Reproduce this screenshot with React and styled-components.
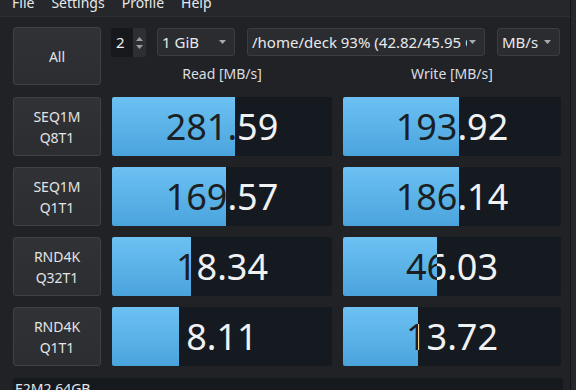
import React from "react";
import styled, { createGlobalStyle } from "styled-components";

const GlobalStyle = createGlobalStyle`
  html, body {
    margin: 0;
    padding: 0;
    background: #202226;
    overflow: hidden;
  }
  body {
    font-family: "Noto Sans", "DejaVu Sans", sans-serif;
    color: #e4e5e7;
  }
`;

const Window = styled.div`
  width: 576px;
  height: 390px;
  overflow: hidden;
  display: flex;
  background: #202226;
`;

const Main = styled.div`
  flex: 1;
  display: flex;
  flex-direction: column;
  min-width: 0;
`;

const EdgeStrip = styled.div`
  width: 5px;
  background: #26282c;
  border-left: 1px solid #141518;
`;

const MenuBar = styled.div`
  height: 26px;
  margin-top: -10px;
  display: flex;
  gap: 17px;
  padding-left: 12px;
  background: #25272b;
  border-bottom: 1px solid #2d2f33;
  font-size: 14px;
  line-height: 26px;
  color: #e6e7e9;
`;

const Content = styled.div`
  padding: 10px 0 0 13px;
  display: flex;
  flex-direction: column;
`;

const Grid = styled.div`
  display: grid;
  grid-template-columns: 88px 220px 218px;
  column-gap: 11px;
`;

const TopGrid = styled(Grid)`
  grid-template-rows: 30px 28px;
  margin-bottom: 12px;
`;

const RowsGrid = styled(Grid)`
  grid-auto-rows: 59px;
  row-gap: 11px;
`;

const PushButton = styled.button`
  box-sizing: border-box;
  margin: 0;
  padding: 0;
  background: linear-gradient(#313236, #2c2d31);
  border: 1px solid #404145;
  border-radius: 3px;
  color: #e2e3e5;
  font-family: inherit;
  font-size: 14px;
  line-height: 21px;
  grid-row: ${(p) => (p.$tall ? "span 2" : "auto")};
  display: flex;
  flex-direction: column;
  align-items: center;
  justify-content: center;
`;

const Controls = styled.div`
  grid-column: 2 / span 2;
  display: flex;
  align-items: flex-start;
  padding-top: 1px;
  margin-left: -1px;
`;

const SpinBox = styled.div`
  display: flex;
  flex-shrink: 0;
  height: 29px;
  width: 35px;
  margin-right: 11px;
`;

const SpinValue = styled.div`
  flex: 1;
  background: #16181c;
  border-radius: 3px 0 0 3px;
  font-size: 15px;
  line-height: 29px;
  padding-left: 5px;
  color: #eff0f1;
`;

const SpinArrows = styled.div`
  width: 13px;
  background: #2d2f33;
  border-radius: 0 3px 3px 0;
  display: flex;
  flex-direction: column;
  align-items: center;
  justify-content: center;
  gap: 4px;
`;

const Combo = styled.div`
  box-sizing: border-box;
  flex-shrink: 0;
  height: 28px;
  width: ${(p) => p.$w}px;
  margin-right: 12px;
  display: flex;
  align-items: center;
  padding: 0 8px 0 4px;
  background: #2a2c30;
  border: 1px solid #3b3d41;
  border-radius: 3px;
  font-size: 15px;
  color: #e8e9eb;
`;

const ComboText = styled.span`
  flex: 1;
  min-width: 0;
  white-space: nowrap;
  overflow: hidden;
  margin-right: 2px;
`;

const Header = styled.div`
  text-align: center;
  font-size: 14px;
  line-height: 28px;
  padding-top: 3px;
  color: #dcdde0;
`;

const Meter = styled.div`
  position: relative;
  background: #151a21;
  border-radius: 2px;
  overflow: hidden;
`;

const MeterText = styled.div`
  width: ${(p) => p.$w}px;
  height: 59px;
  text-align: center;
  font-size: 36px;
  line-height: 59px;
  color: ${(p) => (p.$dark ? "#1b1e23" : "#f0f1f2")};
  white-space: nowrap;
`;

const MeterFill = styled.div`
  position: absolute;
  left: 0;
  top: 0;
  bottom: 0;
  overflow: hidden;
  background: linear-gradient(#6cc1f2, #4aa4dc);
`;

const Comment = styled.div`
  margin-top: 12px;
  width: 548px;
  height: 30px;
  background: #16191e;
  border-radius: 3px;
  font-size: 14px;
  line-height: 22px;
  padding-left: 2px;
  color: #e6e7e9;
`;

function Arrow({ up, color = "#9a9c9f" }) {
  return (
    <svg width="7" height="4" viewBox="0 0 7 4" style={{ flexShrink: 0 }}>
      <path d={up ? "M0 4 L3.5 0 L7 4 Z" : "M0 0 L7 0 L3.5 4 Z"} fill={color} />
    </svg>
  );
}

function ComboBox({ w, children }) {
  return (
    <Combo $w={w}>
      <ComboText>{children}</ComboText>
      <Arrow color="#a8aaad" />
    </Combo>
  );
}

function Bar({ value, fill, width }) {
  return (
    <Meter>
      <MeterText $w={width}>{value}</MeterText>
      <MeterFill style={{ width: fill }}>
        <MeterText $w={width} $dark>
          {value}
        </MeterText>
      </MeterFill>
    </Meter>
  );
}

const rows = [
  { l1: "SEQ1M", l2: "Q8T1", read: "281.59", rf: 123, write: "193.92", wf: 116 },
  { l1: "SEQ1M", l2: "Q1T1", read: "169.57", rf: 114, write: "186.14", wf: 116 },
  { l1: "RND4K", l2: "Q32T1", read: "18.34", rf: 79, write: "46.03", wf: 94 },
  { l1: "RND4K", l2: "Q1T1", read: "8.11", rf: 67, write: "13.72", wf: 75 },
];

export default function App() {
  return (
    <>
      <GlobalStyle />
      <Window>
        <Main>
          <MenuBar>
            <span>File</span>
            <span>Settings</span>
            <span>Profile</span>
            <span>Help</span>
          </MenuBar>
          <Content>
            <TopGrid>
              <PushButton $tall>All</PushButton>
              <Controls>
                <SpinBox>
                  <SpinValue>2</SpinValue>
                  <SpinArrows>
                    <Arrow up />
                    <Arrow />
                  </SpinArrows>
                </SpinBox>
                <ComboBox w={78}>1 GiB</ComboBox>
                <ComboBox w={238}>/home/deck 93% (42.82/45.95 GiB)</ComboBox>
                <ComboBox w={63}>MB/s</ComboBox>
              </Controls>
              <Header>Read [MB/s]</Header>
              <Header>Write [MB/s]</Header>
            </TopGrid>
            <RowsGrid>
              {rows.map((r) => (
                <React.Fragment key={r.l1 + r.l2}>
                  <PushButton>
                    <span>{r.l1}</span>
                    <span>{r.l2}</span>
                  </PushButton>
                  <Bar value={r.read} fill={r.rf} width={220} />
                  <Bar value={r.write} fill={r.wf} width={218} />
                </React.Fragment>
              ))}
            </RowsGrid>
            <Comment>E2M2 64GB</Comment>
          </Content>
        </Main>
        <EdgeStrip />
      </Window>
    </>
  );
}
